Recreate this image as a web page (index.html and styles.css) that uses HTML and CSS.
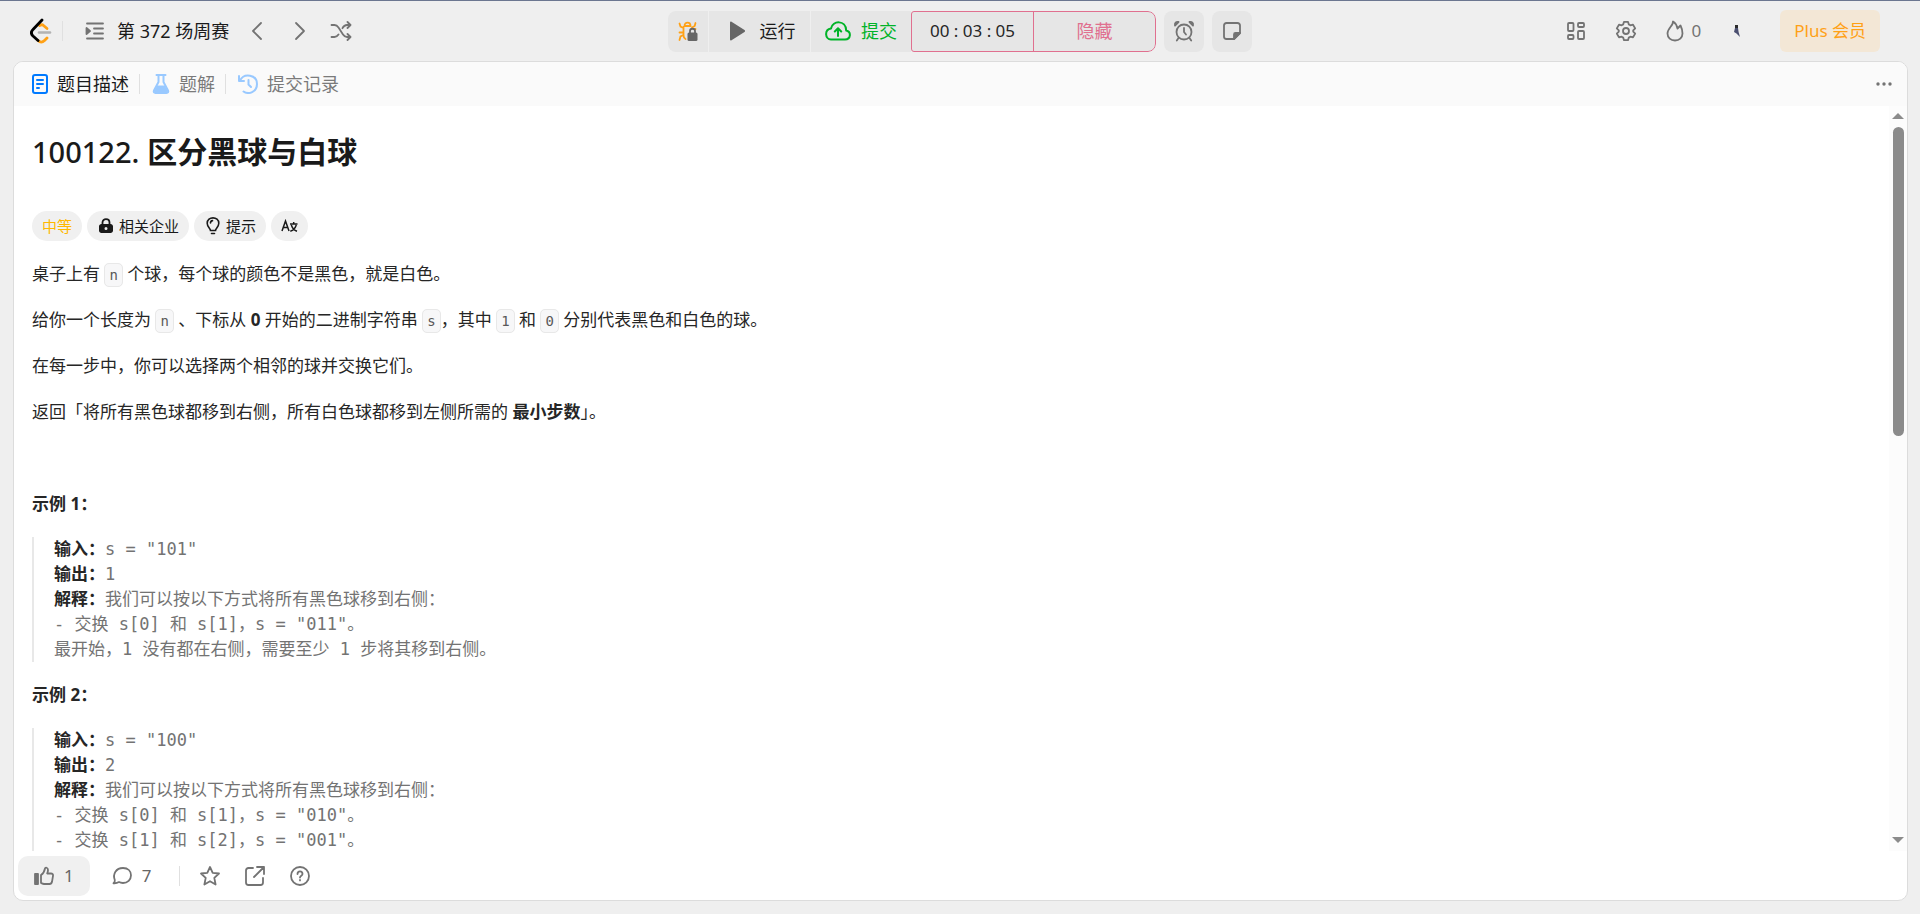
FILE: index.html
```html
<!DOCTYPE html>
<html lang="zh-CN">
<head>
<meta charset="utf-8">
<title>100122. 区分黑球与白球</title>
<link rel="stylesheet" href="styles.css">
</head>
<body>
<header class="topbar">
  <nav class="nav-left">
    <a class="logo" href="#" aria-label="首页">
      <svg width="22" height="26" viewBox="0 0 22 26" fill="none" stroke-width="2.800" stroke-linecap="round" stroke-linejoin="round">
        <path d="M9 14.500h11" stroke="#b3b3b3" stroke-width="2.600"/>
        <path d="M9.500 7.500c1.500-1 3-1 4 0L17 10.500" stroke="#ffa116"/>
        <path d="M8 22.500c2 2 4.500 2 6.500 0l2.500-2.500" stroke="#ffa116"/>
        <path d="M12 2L3 11.500c-2 2-2 4.500 0 6.500l5 4.500" stroke="#000"/>
      </svg>
    </a>
    <span class="rule"></span>
    <button class="contest" type="button">
      <svg class="icon" width="20" height="20" viewBox="0 0 20 20"><path d="M2 2.500h16M9 7.500h9M9 12.500h9M2 17.500h16"/><path d="M1.500 7v6l3.500-3z" class="solid"/></svg>
      <span>第 372 场周赛</span>
    </button>
    <button class="arrow" type="button" aria-label="上一题"><svg class="icon" width="12" height="20" viewBox="0 0 12 20"><path d="M10 2L2 10l8 8"/></svg></button>
    <button class="arrow next" type="button" aria-label="下一题"><svg class="icon" width="12" height="20" viewBox="0 0 12 20"><path d="M2 2l8 8-8 8"/></svg></button>
    <button class="plain" type="button" aria-label="随机一题"><svg class="icon" width="22" height="20" viewBox="0 0 22 20"><path d="M1.500 4h3c2 0 3 1 4 2.500l4.500 7c1 1.500 2 2.500 4 2.500h3M1.500 16h3c2 0 3-1 4-2.500M12.500 7.200C13.500 5.200 15 4 17 4h3M17.500 1l3 3-3 3M17.500 13l3 3-3 3"/></svg></button>
  </nav>
  <div class="tools">
    <div class="run-group">
      <button class="tool debug" type="button" aria-label="调试">
        <svg width="20" height="22" viewBox="0 0 20 22" fill="none" stroke="#ffa116" stroke-width="1.800" stroke-linecap="round"><path d="M6.500 6C6.500 1.500 12.500 1.500 12.500 6zM5.500 7v8c0 2 1 3.500 2 4M1.500 3.500l1 3 3 1.500M1.500 12.500H5M1.500 20l1-3.500 3-1.500M17.500 3l-.8 3-2.700 1.500M17 9h.5"/><rect x="9.500" y="12.500" width="10" height="8.500" rx="1.500" fill="#666" stroke="none"/><path d="M12 13v-2c0-3 5-3 5 0v2" stroke="#666"/></svg>
      </button>
      <button class="tool run" type="button"><svg width="17" height="20" viewBox="0 0 17 20"><path d="M1 1.500v17c0 1 .8 1.300 1.500.8l13-8.300c.8-.6.8-1.500 0-2L2.500.7C1.800.2 1 .5 1 1.500z" fill="#666"/></svg><span>运行</span></button>
      <button class="tool submit" type="button"><svg width="26" height="20" viewBox="0 0 26 20" fill="none" stroke="#01b328" stroke-width="2" stroke-linecap="round" stroke-linejoin="round"><path d="M6 18.500h14c6 0 6.500-7.800 1.200-9C21-1 7.500-1 6 7.500c-7 1-6 11 0 11zM13 15V8M9.800 10.500L13 7.300l3.200 3.200"/></svg><span>提交</span></button>
      <div class="timer"><time class="clock">00 : 03 : 05</time><button class="hide" type="button">隐藏</button></div>
    </div>
    <button class="tool square" type="button" aria-label="闹钟"><svg class="icon" width="22" height="22" viewBox="0 0 22 22"><circle cx="11" cy="12" r="7.500"/><path d="M11 8v4l2 2.500M5.500 18l-1.700 2.500M16.500 18l1.700 2.500"/><path class="solid" d="M2 5.500C1.500 3 3 1.500 5.500 2zM20 5.500C20.500 3 19 1.500 16.500 2z"/></svg></button>
    <button class="tool square" type="button" aria-label="笔记"><svg class="icon" width="20" height="20" viewBox="0 0 20 20"><path d="M18 12V4.500C18 3 17 2 15.500 2h-11C3 2 2 3 2 4.500v11C2 17 3 18 4.500 18H12z"/><path class="solid" d="M12 18v-4.500c0-1 .5-1.500 1.500-1.500H18z"/></svg></button>
  </div>
  <div class="nav-right">
    <button class="plain" type="button" aria-label="布局"><svg class="icon" width="20" height="20" viewBox="0 0 20 20"><rect x="2" y="2" width="5.500" height="8" rx="1"/><rect x="12" y="2" width="6" height="4" rx="1"/><rect x="2" y="14" width="5.500" height="4" rx="1"/><rect x="12" y="10" width="6" height="8" rx="1"/></svg></button>
    <button class="plain" type="button" aria-label="设置"><svg class="icon" width="22" height="22" viewBox="0 0 22 22"><circle cx="11" cy="11" r="3"/><path d="M9 1.800h4l.8 2.600 1.600.9 2.600-.6 2.200 3.700-2 2v1.200l2 2-2.200 3.700-2.600-.6-1.600.9-.8 2.600H9l-.8-2.600-1.600-.9-2.600.6-2.200-3.700 2-2v-1.200l-2-2L4 4.700l2.600.6 1.600-.9z"/></svg></button>
    <a class="streak" href="#"><svg class="icon" width="18" height="22" viewBox="0 0 18 22"><path d="M7 1.500c.5 4-5.500 6.500-5.500 12 0 4.200 3.300 7 7.500 7s7.500-2.800 7.500-7c0-3-1-6-2-8-1 1-2 2-3 3C11 6 9.500 3 7 1.500z"/></svg><span>0</span></a>
    <a class="avatar" href="#" aria-label="个人主页"><svg width="8" height="14" viewBox="0 0 8 14"><path d="M2 1h3v3H2z" fill="#2b2b2b"/><path d="M2 4h3l.6 4L7 13 3.500 9.500 1 8z" fill="#4b4f70"/></svg></a>
    <a class="plus" href="#">Plus 会员</a>
  </div>
</header>
<main class="panel">
  <div class="tabs">
    <a class="tab active" href="#"><svg width="16" height="20" viewBox="0 0 16 20" fill="none" stroke="#007aff" stroke-width="2" stroke-linecap="round"><rect x="1" y="1" width="14" height="18" rx="2"/><path d="M5 6h6M5 10h6M5 14h2"/></svg>题目描述</a>
    <span class="rule"></span>
    <a class="tab" href="#"><svg width="18" height="20" viewBox="0 0 18 20"><path d="M4.500 1h9M6.500 1v7L2 16.500C1.300 18 2 19 3.500 19h11c1.500 0 2.200-1 1.500-2.500L11.500 8V1" fill="none" stroke="#99c9ff" stroke-width="2" stroke-linecap="round"/><path d="M5 11.500h8l3 6-1.500 1.500h-11L2 17.500z" fill="#99c9ff"/></svg>题解</a>
    <span class="rule"></span>
    <a class="tab" href="#"><svg width="20" height="20" viewBox="0 0 20 20" fill="none" stroke="#99c9ff" stroke-width="2" stroke-linecap="round" stroke-linejoin="round"><path d="M1 2v5h5M2 6.500C6-1.500 19 .5 19 10c0 8-8.500 11-13.500 7.500M10.500 6v4.500l2.500 2.500"/></svg>提交记录</a>
    <button class="more" type="button" aria-label="更多"><svg width="18" height="6" viewBox="0 0 18 6" fill="#737373"><circle cx="3" cy="3" r="1.700"/><circle cx="9" cy="3" r="1.700"/><circle cx="15" cy="3" r="1.700"/></svg></button>
  </div>
  <div class="scroller">
    <article class="problem">
      <h1><span class="number">100122.</span> 区分黑球与白球</h1>
      <div class="tags">
        <span class="tag level">中等</span>
        <button class="tag" type="button"><svg width="14" height="16" viewBox="0 0 14 16"><path d="M3.500 7V4.500c0-4.500 7-4.500 7 0V7" fill="none" stroke="#1a1a1a" stroke-width="1.800"/><path fill-rule="evenodd" d="M2.500 6h9C13 6 14 7 14 8.500v4c0 1.500-1 2.500-2.500 2.500h-9C1 15 0 14 0 12.500v-4C0 7 1 6 2.500 6zM7 9a1.500 1.500 0 100 3 1.500 1.500 0 000-3z" fill="#1a1a1a"/></svg>相关企业</button>
        <button class="tag" type="button"><svg width="14" height="18" viewBox="0 0 14 18" fill="none" stroke="#1a1a1a" stroke-width="1.600" stroke-linecap="round"><path d="M4.500 13.500c0-2-3.300-3.500-3.300-7.200C1.200-1 12.800-1 12.800 6.300c0 3.700-3.300 5.200-3.300 7.200zM5.500 16.500h3M4.500 6c0-1.300.8-2.200 2-2.400"/></svg>提示</button>
        <button class="tag translate" type="button" aria-label="翻译"><svg width="17" height="14" viewBox="0 0 17 14" fill="none" stroke="#1a1a1a" stroke-width="1.500"><path d="M1 12L4.500 2 8 12M2.200 8.500h4.600M9 5h7.500M12.700 3v2M10.300 6c1 3 3 5.300 5.700 6.300M15.300 6c-1 3-3 5.300-6 6.300"/></svg></button>
      </div>
      <p>桌子上有 <code>n</code> 个球，每个球的颜色不是黑色，就是白色。</p>
      <p>给你一个长度为 <code>n</code> 、下标从 <strong>0</strong> 开始的二进制字符串 <code>s</code>，其中 <code>1</code> 和 <code>0</code> 分别代表黑色和白色的球。</p>
      <p>在每一步中，你可以选择两个相邻的球并交换它们。</p>
      <p>返回「将所有黑色球都移到右侧，所有白色球都移到左侧所需的 <strong>最小步数</strong>」。</p>
      <p>&nbsp;</p>
      <p><strong>示例 1：</strong></p>
<pre><strong>输入：</strong>s = "101"
<strong>输出：</strong>1
<strong>解释：</strong>我们可以按以下方式将所有黑色球移到右侧：
- 交换 s[0] 和 s[1]，s = "011"。
最开始，1 没有都在右侧，需要至少 1 步将其移到右侧。</pre>
      <p><strong>示例 2：</strong></p>
<pre><strong>输入：</strong>s = "100"
<strong>输出：</strong>2
<strong>解释：</strong>我们可以按以下方式将所有黑色球移到右侧：
- 交换 s[0] 和 s[1]，s = "010"。
- 交换 s[1] 和 s[2]，s = "001"。</pre>
    </article>
    <div class="scrollbar"><span class="up"></span><div class="track"><div class="thumb"></div></div><span class="down"></span></div>
  </div>
  <footer class="actions">
    <button class="action liked" type="button"><svg class="icon" width="20" height="20" viewBox="0 0 20 20"><path class="solid" d="M1 8h3v10H1z"/><path d="M7 9c2.500-1.500 3.500-4 4-6.500.3-1.500 3-1 3 1.500 0 1.500-.5 2.500-.8 3.500H17c1.500 0 2.200 1 2 2.300l-1 6c-.3 1.500-1 2.200-2.500 2.200H10c-1.500 0-2-.7-3-1z"/></svg>1</button>
    <button class="action comment" type="button"><svg class="icon" width="20" height="20" viewBox="0 0 20 20"><path d="M11 2c5 0 8 3.200 8 7.300 0 4.500-3.500 7.700-8 7.700-1.500 0-3-.3-4-.9C5.500 17 3.500 17.500 1.500 17.300c1-.8 1.500-2 1.300-3.300C.5 8 4 2 11 2z"/></svg>7</button>
    <span class="rule"></span>
    <button class="plain" type="button" aria-label="收藏"><svg class="icon" width="20" height="20" viewBox="0 0 20 20"><path d="M10 1l2.700 5.800 6.300.7-4.700 4.300 1.300 6.700L10 15.200l-5.600 3.300 1.300-6.700L1 7.500l6.300-.7z"/></svg></button>
    <button class="plain" type="button" aria-label="分享"><svg class="icon" width="20" height="20" viewBox="0 0 20 20"><path d="M8 2H3.500C2 2 1 3 1 4.500v12C1 18 2 19 3.500 19h12c1.500 0 2.500-1 2.500-2.500V12M12 1h7v7M19 1L9 11"/></svg></button>
    <button class="plain" type="button" aria-label="帮助"><svg class="icon" width="20" height="20" viewBox="0 0 20 20"><circle cx="10" cy="10" r="9"/><path d="M7.500 8c0-3.500 5-3.500 5 0 0 1.700-2.500 1.700-2.500 3.500M10 14v.4"/></svg></button>
  </footer>
</main>
</body>
</html>
```

FILE: styles.css
```css
* { box-sizing: border-box; }
body {
  margin: 0;
  height: 100vh;
  display: flex;
  flex-direction: column;
  border-top: 1px solid #6b7690;
  background: #efefef;
  color: #262626;
  font-family: "Noto Sans", "Noto Sans CJK SC", sans-serif;
  font-size: 17px;
  line-height: 28px;
}
button { border: 0; padding: 0; background: none; color: inherit; font: inherit; cursor: pointer; }
a { color: inherit; text-decoration: none; }
svg { display: block; flex: none; }
.icon { fill: none; stroke: #737373; stroke-width: 1.8; stroke-linecap: round; stroke-linejoin: round; }
.icon .solid { fill: #737373; }
.rule { width: 1px; height: 20px; background: #e0e0e0; }

.topbar { display: grid; grid-template-columns: 1fr auto 1fr; align-items: center; height: 60px; padding: 0 40px 0 30px; flex: none; }
.nav-left, .nav-right, .tools, .run-group, .timer { display: flex; align-items: center; }
.logo { margin-right: 10px; }
.contest { display: flex; align-items: center; gap: 12px; margin: 0 22px; color: #1a1a1a; font-size: 18px; }
.arrow { margin-right: 31px; }
.next { margin-right: 24px; }
.tools { gap: 8px; padding-left: 10px; }
.run-group { border-radius: 8px; overflow: hidden; }
.tool { display: flex; align-items: center; justify-content: center; height: 41px; background: #e6e6e6; font-size: 18px; }
.debug { width: 41px; border-right: 1px solid #efefef; }
.run { width: 102px; gap: 14px; padding-left: 5px; border-right: 1px solid #efefef; color: #1a1a1a; }
.submit { width: 100px; gap: 10px; color: #01b328; }
.square { width: 40px; border-radius: 8px; }
.timer { height: 41px; border: 1px solid #e0708f; border-radius: 3px 8px 8px 3px; background: #e6e6e6; }
.clock { width: 121px; text-align: center; }
.hide { width: 122px; height: 39px; border-left: 1px solid #e0708f; color: #e0708f; font-size: 18px; }
.nav-right { justify-content: flex-end; }
.nav-right .plain { margin-right: 29px; }
.streak { display: flex; align-items: center; gap: 8px; color: #737373; }
.avatar { margin: 0 39px 0 32px; }
.plus { padding: 7px 14px; border-radius: 6px; background: #f3e7d6; color: #ffa116; }

.panel { flex: 1; min-height: 0; display: flex; flex-direction: column; margin: 0 12px 13px 13px; border: 1px solid #dcdcdc; border-radius: 10px; background: #fff; overflow: hidden; }
.tabs { display: flex; align-items: center; gap: 10px; height: 44px; flex: none; padding: 0 14px 0 18px; background: #fafafa; color: #7a7a7a; font-size: 18px; }
.tabs .rule { margin-right: 2px; }
.tab { display: flex; align-items: center; gap: 9px; }
.tab.active { color: #1a1a1a; }
.more { margin-left: auto; }

.scroller { flex: 1; min-height: 0; display: flex; }
.problem { flex: 1; min-width: 0; overflow: hidden; padding: 0 18px; }
h1 { margin: 26px 0 39px; font-size: 30px; line-height: 40px; color: #1a1a1a; }
.number { font-size: 29px; font-weight: 500; }
.tags { display: flex; gap: 5px; margin-bottom: 19px; }
.tag { display: flex; align-items: center; gap: 6px; height: 30px; padding: 0 10px 0 12px; border-radius: 15px; background: #f0f0f0; color: #1a1a1a; font-size: 15px; line-height: 24px; }
.level { padding: 0 10px; color: #ffb800; }
.translate { padding: 0 10px; }
p { margin: 0 0 18px; }
code { padding: 3px 4px; border: 1px solid #e8e8e8; border-radius: 5px; background: #f7f7f8; color: #595959; font-family: "DejaVu Sans Mono", monospace; font-size: 14px; line-height: 16px; }
pre { margin: 19px 0; padding-left: 20px; border-left: 2px solid #e8e8e8; color: #737373; font-family: "DejaVu Sans Mono", "Noto Sans CJK SC", monospace; font-size: 17px; line-height: 25px; }
pre strong { color: #262626; }

.scrollbar { width: 18px; display: flex; flex-direction: column; align-items: center; padding: 7px 0 8px; background: #fcfcfc; }
.up, .down { border: 6px solid transparent; border-top-width: 0; border-bottom: 6px solid #8b8b8b; }
.down { border-top: 6px solid #8b8b8b; border-bottom-width: 0; }
.track { flex: 1; width: 11px; padding: 8px 0; }
.thumb { height: 44%; border-radius: 6px; background: #8b8b8b; }

.actions { display: flex; align-items: center; height: 49px; flex: none; padding: 0 4px; color: #666; }
.action { display: flex; align-items: center; gap: 10px; height: 40px; }
.liked { padding: 0 16px; border-radius: 10px; background: #f0f0f0; }
.comment { padding: 0 28px 0 22px; }
.actions .plain { margin-left: 25px; }
.actions .rule + .plain { margin-left: 20px; }
```
